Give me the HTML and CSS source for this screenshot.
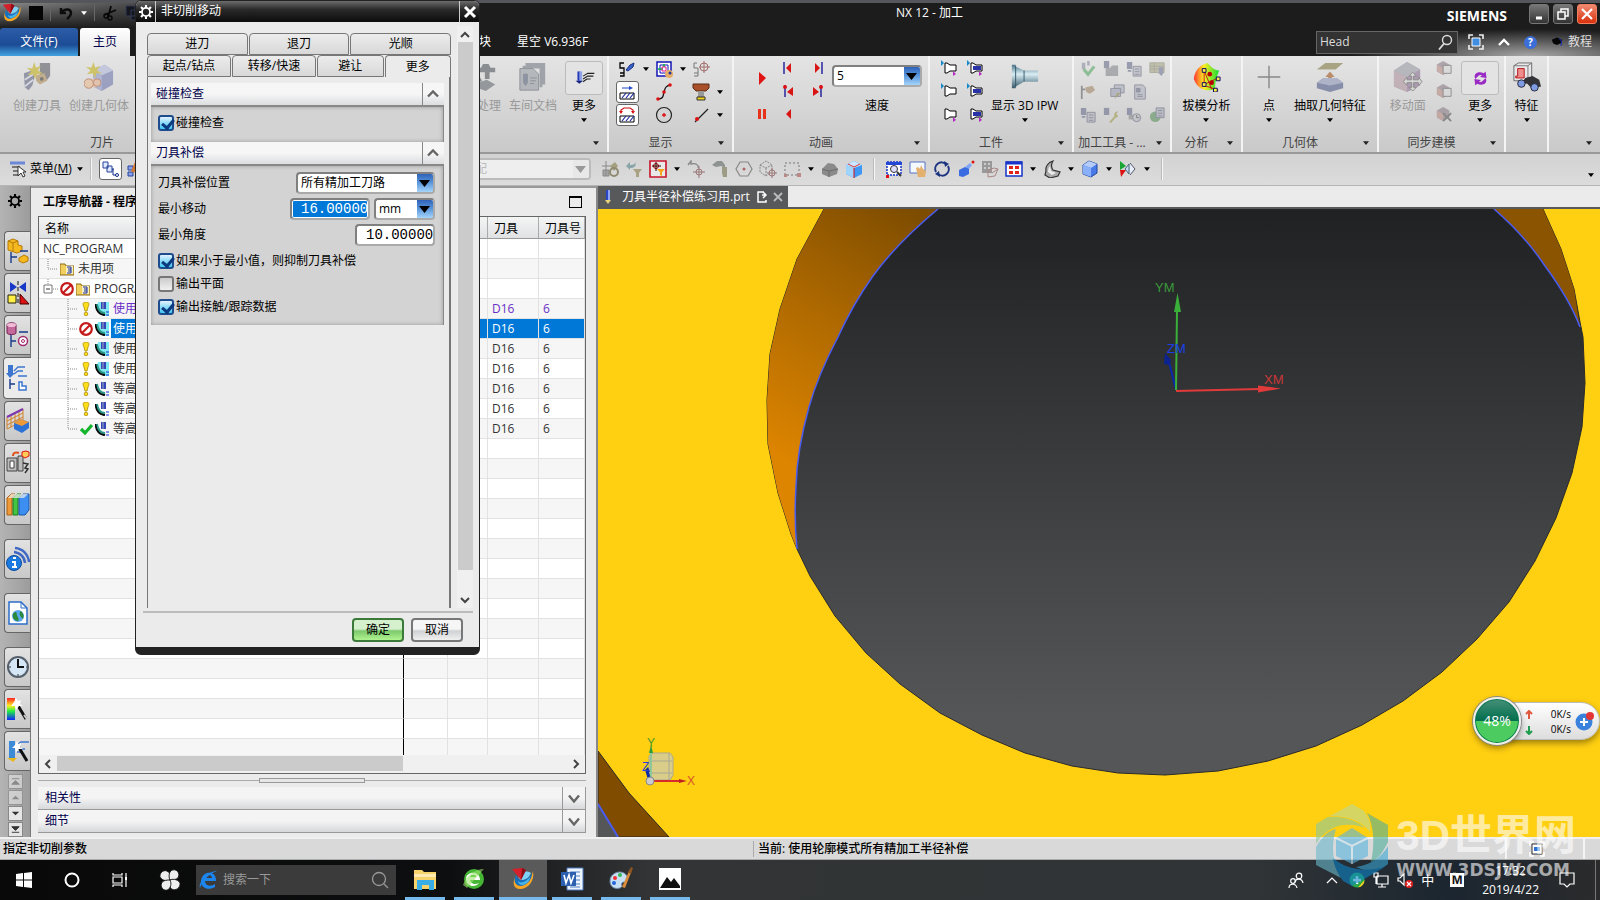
FILE: index.html
```html
<!DOCTYPE html>
<html lang="zh-CN">
<head>
    <meta charset="UTF-8">
    <meta name="viewport" content="width=device-width, initial-scale=1.0">
    <title>NX 12 - 加工</title>
    <link rel="stylesheet" href="styles.css">
</head>
<body>
    <!-- Icon sprite -->
    <svg class="sprite" aria-hidden="true">
        <defs>
            <linearGradient id="g-steel" x1="0" y1="0" x2="0" y2="1"><stop offset="0" stop-color="#4b7688"/><stop offset=".4" stop-color="#d9edf4"/><stop offset="1" stop-color="#35596a"/></linearGradient>
            <linearGradient id="g-rain" x1="0" y1="0" x2="1" y2="0"><stop offset="0" stop-color="#f33"/><stop offset=".4" stop-color="#fe2"/><stop offset="1" stop-color="#1d3"/></linearGradient>
            <linearGradient id="g-rainv" x1="0" y1="0" x2="0" y2="1"><stop offset="0" stop-color="#f22"/><stop offset=".35" stop-color="#fe2"/><stop offset=".6" stop-color="#2e4"/><stop offset="1" stop-color="#12f"/></linearGradient>
        </defs>
        <symbol id="down" viewBox="0 0 8 5"><path d="M0 0h8L4 5z" fill="currentColor"/></symbol>
        <symbol id="gear" viewBox="0 0 16 16"><circle cx="8" cy="8" r="4.6" fill="none" stroke="currentColor" stroke-width="2"/><path d="M8 0v3M8 13v3M0 8h3M13 8h3M2.3 2.3l2.2 2.2M11.5 11.5l2.2 2.2M2.3 13.7l2.2-2.2M11.5 4.5l2.2-2.2" stroke="currentColor" stroke-width="2.4"/></symbol>
        <symbol id="nx" viewBox="0 0 24 24"><path d="M5 9c-4 6-3 13 4 13 8 0 15-8 13-18-1 6-6 11-11 12-4 0-6-3-6-7z" fill="#f6a623"/><path d="M5 8c-3 5-1 11 5 11 6-1 11-6 11-13-2 4-6 7-10 7-3 0-5-2-6-5z" fill="#1670c0"/><path d="M7 8c0-3 9-5 13-2-2 5-6 7-9 7-2 0-4-2-4-5z" fill="#7fd0f5"/><path d="M7 14c3 3 8 1 12-4 0 4-4 8-8 8-2 0-4-2-4-4z" fill="#49b5e8"/><path d="M1 2l10-1 4 2-5 10z" fill="#d3202b"/><path d="M11 1l4 2-5 10z" fill="#8c0f18"/></symbol>
        <symbol id="undo" viewBox="0 0 16 16"><path d="M3 3v5h5M4 7c3-4 9-3 9 1 0 3-2 4-4 6" fill="none" stroke="#0c0c0c" stroke-width="2.500"/></symbol>
        <symbol id="cut" viewBox="0 0 16 16"><path d="M2 10l12-5M6 13l3-12" stroke="#080808" stroke-width="1.800"/><circle cx="4" cy="11" r="2" fill="none" stroke="#080808" stroke-width="1.500"/><circle cx="8" cy="13" r="2" fill="none" stroke="#080808" stroke-width="1.500"/></symbol>
        <symbol id="copy" viewBox="0 0 16 16"><path d="M1 1h9v10H1zM6 5h9v10H6z" fill="#15161d" stroke="#333a55"/></symbol>
        <symbol id="search" viewBox="0 0 16 16"><circle cx="10" cy="6" r="4.5" fill="none" stroke="currentColor" stroke-width="1.4"/><path d="M7 9.500l-5 6" stroke="currentColor" stroke-width="1.800"/></symbol>
        <symbol id="full" viewBox="0 0 16 16"><path d="M1 5V1h4M11 1h4v4M15 11v4h-4M5 15H1v-4" fill="none" stroke="#eee" stroke-width="1.6"/><path d="M4 4h8v8H4z" fill="#3f8ce0" stroke="#fff"/></symbol>
        <symbol id="up" viewBox="0 0 12 8"><path d="M1 7l5-5 5 5" fill="none" stroke="currentColor" stroke-width="2.400"/></symbol>
        <symbol id="hat" viewBox="0 0 16 16"><path d="M1 5l7-3 7 3-1 4-6 3-5-2z" fill="#050505"/><path d="M11 4c3 1 4 5 2 9" fill="none" stroke="#1b2ea8" stroke-width="1.500"/></symbol>

        <!-- ribbon, large -->
        <symbol id="mktool" viewBox="0 0 32 32"><path d="M19 1h11v14l-4 5-7-2z" fill="#6f7078"/><path d="M15 14l9-2 3 8-8 4-4-4z" fill="#b69a6c"/><path d="M2 12l9-3 3 5-3 11-4 5-4-3z" fill="#74788e"/><path d="M3 19l9-6M3 26l9-7" stroke="#d3d6e3" stroke-width="2"/><path d="M13 0l2 6 5-2-3 5 5 3-6 1-2 5-2-5-6 1 4-4-5-4 6 1z" fill="#c6b738"/><circle cx="21" cy="18" r="2" fill="#555"/></symbol>
        <symbol id="mkgeo" viewBox="0 0 32 32"><path d="M10 9l12-6 9 6v15l-12 7-9-5z" fill="#8188b5"/><path d="M10 9l9 5v17l-9-5z" fill="#9ca3cb"/><path d="M10 9l12-6 9 6-12 5z" fill="#b9bedb"/><path d="M5 18h8v9H5z" fill="#e4b89a"/><circle cx="5" cy="23" r="5" fill="#e8c19d" stroke="#b06a4c"/><circle cx="14" cy="22" r="4" fill="#e4b89a" stroke="#b06a4c"/><path d="M10 0l2 6 5-2-3 5 5 3-6 0-1 5-3-5-6 1 4-4-5-4 6 1z" fill="#c6b738"/></symbol>
        <symbol id="post" viewBox="0 0 32 32"><path d="M2 12h10v3l3 5-5 3-6-2zM10 6h4l2-4h6l2 4h5v5h-6v7h-5v-7h-8z" fill="#666b70"/><path d="M8 23l12-4 9 5-10 7-11-4z" fill="#777b80"/></symbol>
        <symbol id="docs" viewBox="0 0 32 32"><path d="M8 1h21v23h-3V4H8zM5 4h21v23h-3V7H5z" fill="#858b93"/><path d="M2 7h14l6 6v17H2z" fill="#a3a8af" stroke="#6c727a"/><path d="M6 13h4v9l-2 3-2-3zM13 17h7M13 20h6M13 23h4" fill="#6b7790" stroke="#6c727a"/></symbol>
        <symbol id="mill" viewBox="0 0 32 32"><path d="M9 9h3v10H9z" fill="#2438b8"/><path d="M11 9h3v10h-3z" fill="#8fa3e6"/><path d="M7 19h8l-4 3z" fill="#16227c"/><path d="M15 14l5-3h7M15 17l5-3h6M15 20l4-3h4" fill="none" stroke="#222" stroke-width="1.200"/></symbol>
        <symbol id="ipw" viewBox="0 0 32 32"><path d="M2 3h4v2l9 4h15v12H15l-9 5v2H2z" fill="url(#g-steel)"/><path d="M6 4v23M15 9v12" stroke="#35596a"/></symbol>
        <symbol id="draft" viewBox="0 0 32 32"><path d="M3 18C4 9 9 3 18 1c3 4 7 8 12 8-3 8-5 15-4 20-8 3-19 1-23-11z" fill="url(#g-rain)"/><path d="M14 9l8 20M14 24l15-7M14 9v16l15 5" stroke="#c51313" fill="none"/><path d="M12 7h4v4h-4zM12 22h4v4h-4zM27 16h4v4h-4zM24 28h4v4h-4z" fill="#fe4" stroke="#006"/><circle cx="20" cy="13" r="2.500" fill="#b00"/><circle cx="22" cy="22" r="2.500" fill="#b00"/></symbol>
        <symbol id="point" viewBox="0 0 32 32"><path d="M16 4v24M4 16h24" stroke="#888" stroke-width="1.500"/></symbol>
        <symbol id="extract" viewBox="0 0 32 32"><path d="M2 8l9-7h19l-8 7z" fill="#a8a483"/><path d="M16 10l5 6h-3v6h-4v-6h-3z" fill="#b98d6c"/><path d="M2 22l7-5h14l7 5v6l-14 4-14-4z" fill="#878eaa"/><path d="M2 22l7-5h14l7 5-14 3z" fill="#aeb3c8"/></symbol>
        <symbol id="cubemove" viewBox="0 0 32 32"><path d="M1 9l14-9 14 8v17l-14 7L1 26z" fill="#98809f"/><path d="M1 9l14 7v16L1 26z" fill="#b7a0a8"/><path d="M1 9l14-9 14 8-14 8z" fill="#a5a5af"/><path d="M21 11l4 4h-3v4h5v-3l4 5-4 4v-3h-5v5h3l-4 4-4-4h3v-5h-5v3l-4-4 4-5v3h5v-4h-3z" fill="#d4d4d4" stroke="#666"/></symbol>
        <symbol id="sync" viewBox="0 0 32 32"><path d="M11 17c-3-6 4-9 9-6l2-2 1 7-7-1 2-2c-3-1-4 1-7 4zM22 16c3 6-4 9-9 6l-2 2-1-7 7 1-2 2c3 1 4-1 7-4z" fill="#9a2bc4"/></symbol>
        <symbol id="feature" viewBox="0 0 32 32"><path d="M2 4l5-3h14v15l-4 4H2z" fill="#e8e8ea" stroke="#666"/><path d="M17 4l4-3M2 4h15v16" stroke="#777" fill="none"/><path d="M6 7h7v10H4v-2h2z" fill="#ef8c8c" stroke="#b41414"/><path d="M14 17l8-2 7 4 2 7-10 2-5-5-6 1z" fill="#343438"/><circle cx="10" cy="23" r="4" fill="#7f9be2" stroke="#223"/><circle cx="24" cy="27" r="4" fill="#7f9be2" stroke="#223"/></symbol>

        <!-- ribbon, small -->
        <symbol id="s5pen" viewBox="0 0 18 18"><path d="M6 3H2v5h4v5H2M2 16h4v-3" fill="none" stroke="#000" stroke-width="1.300"/><path d="M8 10l4-5 4-2-1 4-5 4z" fill="#3b62cf" stroke="#18307c"/></symbol>
        <symbol id="rings" viewBox="0 0 18 18"><path d="M2 2h14v14H2z" fill="#fff" stroke="#1414b8" stroke-width="1.500"/><path d="M5 5h8v8H5z" fill="none" stroke="#1414b8"/><path d="M3 9h5M9 4v3" stroke="#00bb36" stroke-width="1.500"/><path d="M7 7h4v4H7z" fill="none" stroke="#e2138d"/><circle cx="14" cy="14" r="4" fill="#e5ad66"/><circle cx="15" cy="13" r="1.500" fill="#23a"/></symbol>
        <symbol id="s5aim" viewBox="0 0 18 18"><path d="M5 3H2v5h4v5H2M2 16h4v-3" fill="none" stroke="#777"/><circle cx="12" cy="7" r="4" fill="none" stroke="#a06c6c"/><path d="M12 1v12M7 7h11" stroke="#a06c6c"/></symbol>
        <symbol id="hatch" viewBox="0 0 18 18"><path d="M2 10h14v6H2z" fill="#fff" stroke="#000"/><path d="M4 15l4-5M8 15l4-5M12 15l4-5" stroke="#1d2a9d" stroke-width="1.200"/><path d="M4 5h9" stroke="#1e49c9"/><path d="M11 3l4 2-4 2z" fill="#1e49c9"/></symbol>
        <symbol id="hatchr" viewBox="0 0 18 18"><path d="M2 10h14v6H2z" fill="#fff" stroke="#000"/><path d="M4 15l4-5M8 15l4-5M12 15l4-5" stroke="#1d2a9d" stroke-width="1.200"/><path d="M3 6V4l3-2h6l3 2v2" stroke="#c11" fill="none" stroke-width="1.200"/><path d="M1 5h4l-2 3zM13 5h4l-2 3z" fill="#d11"/></symbol>
        <symbol id="curve" viewBox="0 0 18 18"><path d="M3 16c6 0 5-4 6-7s1-6 6-7" fill="none" stroke="#111" stroke-width="1.300"/><circle cx="3" cy="16" r="1.800" fill="#d11"/><circle cx="9" cy="9" r="1.800" fill="#d11"/><circle cx="15" cy="2" r="1.800" fill="#d11"/></symbol>
        <symbol id="holder" viewBox="0 0 18 18"><path d="M1 1h16v4l-3 3H4L1 5z" fill="#a9502a" stroke="#5c2a12"/><path d="M6 8h6v6H6z" fill="#999"/><path d="M5 14h8v3H5z" fill="#f2d21b" stroke="#333"/></symbol>
        <symbol id="circ" viewBox="0 0 18 18"><circle cx="9" cy="9" r="7.500" fill="none" stroke="#222" stroke-width="1.200"/><path d="M9 7v4M7 9h4" stroke="#d11" stroke-width="1.400"/></symbol>
        <symbol id="slash" viewBox="0 0 18 18"><path d="M3 16L16 3" stroke="#222" stroke-width="1.300"/><circle cx="5" cy="13" r="2" fill="#d11"/></symbol>
        <symbol id="play" viewBox="0 0 18 18"><path d="M6 3l7 6-7 7z" fill="#e01414"/></symbol>
        <symbol id="pause" viewBox="0 0 18 18"><path d="M5 4h3v10H5zM10 4h3v10h-3z" fill="#e8321c"/></symbol>
        <symbol id="first" viewBox="0 0 18 18"><path d="M5 3v12" stroke="#1b1b9a" stroke-width="1.400"/><path d="M12 4v10L7 9z" fill="#d91414"/></symbol>
        <symbol id="last" viewBox="0 0 18 18"><path d="M13 3v12" stroke="#1b1b9a" stroke-width="1.400"/><path d="M6 4v10l5-5z" fill="#d91414"/></symbol>
        <symbol id="firstd" viewBox="0 0 18 18"><path d="M6 3v12" stroke="#1b1b9a" stroke-width="1.400"/><circle cx="6" cy="5" r="2" fill="#d11"/><path d="M14 5v9L8 10z" fill="#d91414"/></symbol>
        <symbol id="lastd" viewBox="0 0 18 18"><path d="M12 3v12" stroke="#1b1b9a" stroke-width="1.400"/><circle cx="12" cy="5" r="2" fill="#d11"/><path d="M4 5v9l6-4z" fill="#d91414"/></symbol>
        <symbol id="back" viewBox="0 0 18 18"><path d="M12 4v10L7 9z" fill="#d91414"/></symbol>
        <symbol id="wp1" viewBox="0 0 18 18"><path d="M5 4h2l3 2h6v6h-6l-3 2H5z" fill="#fff" stroke="#000"/><path d="M1 1v6l3-3z" fill="#1589c9"/><path d="M13 12v5l3-2z" fill="#b52bc4"/></symbol>
        <symbol id="wp2" viewBox="0 0 18 18"><path d="M5 4h2l3 2h6v6h-6l-3 2H5z" fill="#fff" stroke="#000"/><path d="M7 7h8v4H7z" fill="#2a32a8"/><path d="M1 1v6l3-3z" fill="#1589c9"/><path d="M13 12v5l3-2z" fill="#b52bc4"/></symbol>
        <symbol id="wp3" viewBox="0 0 18 18"><path d="M5 4h2l3 2h6v6h-6l-3 2H5z" fill="#fff" stroke="#000"/><path d="M1 1v6l3-3z" fill="#1589c9"/></symbol>
        <symbol id="wp4" viewBox="0 0 18 18"><path d="M5 4h2l3 2h6v6h-6l-3 2H5z" fill="#fff" stroke="#000"/><path d="M13 12v5l3-2z" fill="#b52bc4"/></symbol>
        <symbol id="wp5" viewBox="0 0 18 18"><path d="M5 4h2l3 2h6v6h-6l-3 2H5z" fill="#fff" stroke="#000"/><path d="M7 7h8v4H7z" fill="#2a32a8"/><path d="M1 1v6l3-3z" fill="#1589c9"/></symbol>
        <symbol id="wp6" viewBox="0 0 18 18"><path d="M5 4h2l3 2h6v6h-6l-3 2H5z" fill="#fff" stroke="#000"/><path d="M7 7h8v4H7z" fill="#2a32a8"/><path d="M13 12v5l3-2z" fill="#b52bc4"/></symbol>
        <symbol id="t-check" viewBox="0 0 18 18"><path d="M2 2h4v7H2zM8 0h3v5H8z" fill="#8c90a3"/><path d="M4 9l5 6 7-9" fill="none" stroke="#58a868" stroke-width="3.500"/></symbol>
        <symbol id="t-part" viewBox="0 0 18 18"><path d="M1 0h6v8H1z" fill="#6a6f8c"/><path d="M3 8h5l2-3h7v12H3z" fill="#85888f"/></symbol>
        <symbol id="t-list" viewBox="0 0 18 18"><path d="M1 1h6v8H1zM2 10h4v2H2z" fill="#6a6f8c"/><path d="M8 6h9v11H8z" fill="#b2b4c0" stroke="#5f6278"/><path d="M10 9h5M10 12h5M10 15h5" stroke="#5f6278"/></symbol>
        <symbol id="t-doc" viewBox="0 0 18 18"><path d="M3 1h9l3 3v13H3z" fill="#b2b4c0" stroke="#5f6278"/><path d="M5 5h4v4H5zM6 12h6M6 14h6" fill="#6a6f8c" stroke="#5f6278"/></symbol>
        <symbol id="t-flag" viewBox="0 0 18 18"><path d="M2 2v15M2 6h4" stroke="#666" stroke-width="2"/><path d="M6 4l8-2 3 5-6 4-4-2z" fill="#a08868"/></symbol>
        <symbol id="t-copy" viewBox="0 0 18 18"><path d="M6 1h11v9H6z" fill="#aaaebb" stroke="#5f6278"/><path d="M2 5h11v9H2z" fill="#9da0b3" stroke="#5f6278"/><path d="M6 17l3-7h4z" fill="#8b8246"/></symbol>
        <symbol id="t-clock" viewBox="0 0 18 18"><path d="M1 1h6v8H1z" fill="#6a6f8c"/><path d="M3 9h5v5H3z" fill="#8a8a8a"/><circle cx="12" cy="12" r="4.500" fill="#b9bcc4" stroke="#5f6278"/><path d="M12 9v3h3" fill="none" stroke="#444"/></symbol>
        <symbol id="t-wrench" viewBox="0 0 18 18"><path d="M1 1h6v8H1z" fill="#6a6f8c"/><path d="M7 17l6-7c-1-3 1-5 4-5l-2 3 2 2c-1 2-2 2-3 2l-5 6z" fill="#a19a4e"/></symbol>
        <symbol id="t-globe" viewBox="0 0 18 18"><circle cx="7" cy="11" r="6" fill="#5c9260"/><path d="M8 1h9v11H8z" fill="#a9adbc" stroke="#5f6278"/><path d="M10 4h5M10 7h5M10 10h5" stroke="#5f6278"/></symbol>
        <symbol id="t-grid" viewBox="0 0 18 18"><path d="M1 2h16v11H1z" fill="#aaa98b" stroke="#88886f"/><path d="M1 6h16M1 9h16M6 2v11" stroke="#88886f"/><path d="M11 7h5v7l-2 3-3-3z" fill="#737896"/></symbol>
        <symbol id="cubes" viewBox="0 0 18 18"><path d="M1 5l7-4 7 4v8l-7 4-7-4z" fill="#8d7d88"/><path d="M1 5l7 4v8l-7-4z" fill="#b68c84"/><path d="M8 6h9v9H8z" fill="#d6d6d6" stroke="#555"/></symbol>
        <symbol id="cubex" viewBox="0 0 18 18"><path d="M1 5l7-4 7 4v8l-7 4-7-4z" fill="#8d7d88"/><path d="M1 5l7 4v8l-7-4z" fill="#b68c84"/><path d="M8 8l9 9M17 8l-9 9" stroke="#555" stroke-width="2"/></symbol>

        <!-- selection bar -->
        <symbol id="menu" viewBox="0 0 18 18"><path d="M1 3h15" stroke="#6b87d8" stroke-width="3"/><path d="M3 7h8M4 11h6M4 15h6" stroke="#777" stroke-width="2"/><path d="M9 6v10l3-3 2 4 2-1-2-4h3z" fill="#fff" stroke="#333"/></symbol>
        <symbol id="tree" viewBox="0 0 18 18"><path d="M2 2h5v6H2zM6 6h5v6H6z" fill="#dfe8ff" stroke="#27429c"/><path d="M12 9v6h3M11 9h2" stroke="#112a8a" fill="none"/><circle cx="16" cy="15" r="1.500" fill="none" stroke="#112a8a"/></symbol>
        <symbol id="tree2" viewBox="0 0 18 18"><path d="M2 6h5v4H2zM2 12h5v4H2z" fill="#8aa2ea" stroke="#27429c"/><path d="M5 11l4-9 4 2-5 9z" fill="#cf7a38"/></symbol>
        <symbol id="m1" viewBox="0 0 18 18"><path d="M5 1v15M1 6h9M2 10h6v6H2z" stroke="#888" fill="#a4a4a4"/><path d="M9 6l5-4 3 4-4 5z" fill="#a4a07f"/><circle cx="13" cy="12" r="4" fill="none" stroke="#8e8b70" stroke-width="2"/></symbol>
        <symbol id="m2" viewBox="0 0 18 18"><path d="M1 6l4-4v3c4 0 5-1 5-3 2 4-1 6-5 6v2z" fill="#8aa5aa"/><path d="M8 9h9l-3 4v4h-3v-4z" fill="#aaa383"/></symbol>
        <symbol id="m3" viewBox="0 0 18 18"><path d="M1 1h16v16H1z" fill="#e9e9e9" stroke="#c8132a" stroke-width="1.600"/><circle cx="7" cy="6" r="2.500" fill="none" stroke="#a00"/><path d="M7 2v9M3 6h9" stroke="#300"/><path d="M8 9h8l-3 3v4l-2-1v-3z" fill="#f5a516"/></symbol>
        <symbol id="m4" viewBox="0 0 18 18"><path d="M1 5l3-4v3c5-1 8 1 7 4" fill="none" stroke="#888" stroke-width="1.300"/><circle cx="12" cy="12" r="3" fill="none" stroke="#977"/><path d="M12 6v12M6 12h12" stroke="#977"/></symbol>
        <symbol id="m5" viewBox="0 0 18 18"><path d="M1 5l5-4h5l3 4v3l-4-2-5 1z" fill="#8f9392"/><path d="M11 7h5v10h-4l-1-4z" fill="#9c9c86"/></symbol>
        <symbol id="m6" viewBox="0 0 18 18"><path d="M5 2h8l4 7-4 7H5L1 9z" fill="none" stroke="#888" stroke-width="1.200"/><circle cx="9" cy="9" r="1.500" fill="#a66"/></symbol>
        <symbol id="m7" viewBox="0 0 18 18"><path d="M1 5l6-4 6 4v7l-6 4-6-4zM1 5l6 3 6-3M7 8v8" fill="none" stroke="#888" stroke-dasharray="2 1"/><circle cx="13" cy="13" r="3" fill="#ddd" stroke="#977"/><path d="M13 8v10M8 13h10" stroke="#977"/></symbol>
        <symbol id="m8" viewBox="0 0 18 18"><path d="M2 3h14v12H2z" fill="none" stroke="#777" stroke-dasharray="2 2"/><path d="M14 13h4v4h-4zM1 14h3v3H1z" fill="#b88"/></symbol>
        <symbol id="m9" viewBox="0 0 18 18"><path d="M1 9l6-6 6 1 4 5-1 5-8 3-7-3z" fill="#8a8a8a"/><path d="M1 9l7 2 9-2M8 11v6" stroke="#6b6b6b" fill="none"/></symbol>
        <symbol id="m10" viewBox="0 0 18 18"><path d="M1 5l8-4 8 4v9l-8 4-8-4z" fill="#3e97f0"/><path d="M1 5l8 3v10l-8-4z" fill="#9fd4ff"/><path d="M1 5l8-4 8 4-8 3z" fill="#c9e7ff"/><path d="M9 8v10" stroke="#d11"/><path d="M3 4l6 3 6-3" stroke="#d33" fill="none"/></symbol>
        <symbol id="m11" viewBox="0 0 18 18"><path d="M2 2h14v13H2z" fill="#fff" stroke="#1733c8" stroke-width="1.500" stroke-dasharray="2 1"/><path d="M1 2h16v3H1z" fill="#2447d8"/><circle cx="9" cy="9" r="3.500" fill="#ddf" stroke="#333"/><path d="M12 12l4 4" stroke="#333" stroke-width="2"/><path d="M1 15h3v3H1z" fill="#d11"/></symbol>
        <symbol id="m12" viewBox="0 0 18 18"><path d="M1 2h15v11H1z" fill="#f4f8ff" stroke="#5673c4"/><path d="M7 8l2-1 2 2 1-4 2 4 3 2-1 6H9z" fill="#e3b16d"/></symbol>
        <symbol id="m13" viewBox="0 0 18 18"><path d="M3 12A6.500 6.500 0 0 1 13 4M15 6A6.500 6.500 0 0 1 5 14" fill="none" stroke="#1d3480" stroke-width="2"/><path d="M11 1l5 3-4 3zM7 17l-5-3 4-3z" fill="#1d3480"/></symbol>
        <symbol id="m14" viewBox="0 0 18 18"><path d="M2 10l6-3 4 1v6l-6 3-4-1z" fill="#3a6be0"/><path d="M8 7l5-4 2 2-3 4z" fill="#7fa6f5"/><circle cx="16" cy="2" r="1.500" fill="#d11"/></symbol>
        <symbol id="m15" viewBox="0 0 18 18"><path d="M1 1h10v12H1z" fill="#999"/><path d="M3 4h2M7 4h2M3 8h2M7 8h2" stroke="#ccc" stroke-width="2"/><path d="M7 10l6-2 4 1-3 7-7 1zM7 10l4 3 6-4" fill="none" stroke="#a88"/></symbol>
        <symbol id="m16" viewBox="0 0 18 18"><path d="M1 2h16v14H1z" fill="#fff" stroke="#1733c8" stroke-width="1.500"/><path d="M1 3h16" stroke="#1733c8" stroke-width="3"/><path d="M4 6h4v3H4zM10 6h4v3h-4zM4 11h4v3H4zM10 11h4v3h-4z" fill="#e2231a"/></symbol>
        <symbol id="m17" viewBox="0 0 18 18"><path d="M3 11C2 6 6 2 10 1c-2 3-2 6 0 9l7 2-2 4-8 2-5-3z" fill="#aaa" stroke="#333" stroke-width="1.200"/><path d="M5 12c0-3 1-5 2-6l1 5 5 2-4 2z" fill="#eee"/></symbol>
        <symbol id="m18" viewBox="0 0 18 18"><path d="M2 5l6-4 8 3v9l-6 4-8-3z" fill="#4a7ae8" stroke="#20449c"/><path d="M2 5l6-4 8 3-6 4z" fill="#b5ccfa"/><path d="M2 5l8 3v9l-8-3z" fill="#8bb0fa"/></symbol>
        <symbol id="m19" viewBox="0 0 18 18"><path d="M1 1l6 5-6 4z" fill="#19a535"/><path d="M1 10l6 0-5 7z" fill="#d11"/><path d="M6 9l4-5v10z" fill="#c6d8f6" stroke="#467"/><path d="M11 3l5 6-5 6" fill="#e6eefc" stroke="#556"/></symbol>

        <!-- resource bar -->
        <symbol id="r1" viewBox="0 0 24 26"><path d="M2 3l5-2 5 2v4l4 1v5l-5 2-9-3z" fill="#f5b81f" stroke="#b57b08"/><path d="M2 3l5 2 5-2M7 5v8" stroke="#b57b08" fill="none"/><path d="M5 14v11M5 19h6M14 13h8" stroke="#173a8a" stroke-width="1.400"/><path d="M13 20l5-3 4 2v4l-5 2-4-2z" fill="#f5b81f" stroke="#b57b08"/></symbol>
        <symbol id="r2" viewBox="0 0 24 26"><path d="M4 2v10l7-5zM20 2v10l-7-5z" fill="#1838c8"/><path d="M12 1v24" stroke="#111" stroke-dasharray="4 2"/><path d="M2 15h8v8H2z" fill="#fe4" stroke="#221"/><path d="M14 14v10h9z" fill="#d11" stroke="#400"/></symbol>
        <symbol id="r3" viewBox="0 0 24 26"><path d="M1 3c0-3 9-3 9 0v8c0 2-9 2-9 0z" fill="#c26a9c" stroke="#701c4c"/><ellipse cx="5.500" cy="3" rx="4.500" ry="2" fill="#f0bcd8"/><path d="M5 13v12M5 19h5M13 10h9" stroke="#173a8a" stroke-width="1.400"/><circle cx="17" cy="19" r="4.500" fill="#fff" stroke="#a02c70" stroke-width="1.500"/><circle cx="17" cy="19" r="1.500" fill="none" stroke="#a02c70"/></symbol>
        <symbol id="r4" viewBox="0 0 24 26"><path d="M3 0h5v8H3z" fill="#3c76cf"/><path d="M1 8h9l-5 5z" fill="#3c76cf"/><path d="M9 6l4-4h7M9 9l4-3h5M13 11h9" stroke="#3c76cf" stroke-width="1.300" fill="none"/><path d="M5 14v10M5 19h5" stroke="#173a8a" stroke-width="1.400"/><path d="M14 17h3v4h4v4h-7z" fill="#fff" stroke="#3c76cf" stroke-width="1.500"/></symbol>
        <symbol id="r5" viewBox="0 0 24 26"><path d="M1 9L17 1v12L1 21zM1 13l16-8M1 17l16-8M5 7v12M9 5v12M13 3v12" stroke="#d2822a" fill="none"/><path d="M1 9L17 1" stroke="#7a35b0" stroke-width="2"/><path d="M8 15l6-4 9 3v6l-7 5-8-4z" fill="#2c71d6"/><path d="M8 15l6-4 9 3-7 4z" fill="#ef9a3a"/></symbol>
        <symbol id="r6" viewBox="0 0 24 26"><path d="M1 8h10v13H1zM12 6h5v15h-5z" fill="#bbb" stroke="#444"/><path d="M4 11h4v7H4z" fill="#fff" stroke="#444"/><path d="M7 6c0-4 4-4 6-3" stroke="#e2501b" stroke-width="2" fill="none"/><path d="M16 2l4-1 3 1v4l-4 2-3-2z" fill="#fc5" stroke="#d11"/><path d="M17 13l5 1-3 4 3 1-3 4" fill="none" stroke="#333" stroke-width="1.500"/></symbol>
        <symbol id="r7" viewBox="0 0 24 26"><path d="M1 6l4-4h4L6 6v17H1z" fill="#ef9a3a" stroke="#a85f10"/><path d="M7 6l4-4h4l-3 4v17H7z" fill="#43c443" stroke="#1b7a1b"/><path d="M13 6l4-4h6v16l-4 5h-6z" fill="#3c8ff0" stroke="#1a52a8"/><path d="M5 2h17l-4 4H2z" fill="#eee" opacity=".7"/></symbol>
        <symbol id="r8" viewBox="0 0 24 26"><path d="M8 6a12 12 0 0 1 11 11M9 2a15 15 0 0 1 14 14" fill="none" stroke="#3d68c4" stroke-width="2.500"/><circle cx="8" cy="17" r="7.500" fill="#1b7ae0" stroke="#0c4aa0"/><path d="M7 12h3M6 16h3v5M6 21h5" stroke="#fff" stroke-width="2" fill="none"/></symbol>
        <symbol id="r9" viewBox="0 0 24 26"><path d="M3 2h12l6 6v16H3z" fill="#fff" stroke="#2c6cc8" stroke-width="1.500"/><path d="M15 2v6h6" fill="none" stroke="#2c6cc8"/><circle cx="12" cy="16" r="6" fill="#5aa7ef"/><path d="M7 14c3-4 4-1 4 1s3 3 1 6c-4 0-6-4-5-7zM14 11c4 2 4 5 3 8-3-2-4-5-3-8z" fill="#2b8a3a"/></symbol>
        <symbol id="r10" viewBox="0 0 24 26"><circle cx="12" cy="13" r="10" fill="#d5e6f7" stroke="#555f6c" stroke-width="2"/><path d="M12 5v8h6" fill="none" stroke="#111" stroke-width="2"/><path d="M12 20v2M3 13h2M20 13h1" stroke="#333"/></symbol>
        <symbol id="r11" viewBox="0 0 24 26"><path d="M1 2h8v22H1z" fill="url(#g-rainv)"/><path d="M11 8l9 15" stroke="#111" stroke-width="3"/><path d="M10 2l2 3 3-1-1 4 3 2-4 0-3 4-1-4-4 0 3-4z" fill="#fff"/><path d="M18 19l3 4" stroke="#ccc" stroke-width="2"/></symbol>
        <symbol id="r12" viewBox="0 0 24 26"><path d="M3 3h6v17H3z" fill="#3c8bd6"/><path d="M1 20h10l-4 4z" fill="#e8b823"/><path d="M11 7l4-3h8M11 11h8M11 14h6" stroke="#3c76cf" stroke-width="1.500" fill="none"/><path d="M12 8l9 15" stroke="#111" stroke-width="3"/><path d="M11 3l1 3 3-1-1 4 3 2-4 0-3 3-1-4-3 0 3-3z" fill="#fff"/></symbol>

        <!-- operation tree -->
        <symbol id="folder" viewBox="0 0 14 14"><path d="M0 2h5l1 2h8v9H0z" fill="#f0cf5e" stroke="#8b6b14"/><path d="M6 4h7v8H6z" fill="#f8efc0"/><path d="M7 5h4v2H8M8 9h3V7M7 11h4V9" stroke="#1a2fa8" fill="none"/></symbol>
        <symbol id="noentry" viewBox="0 0 14 14"><circle cx="7" cy="7" r="5.800" fill="#fff" stroke="#c51a1a" stroke-width="2.200"/><path d="M3 11l8-8" stroke="#c51a1a" stroke-width="2.200"/></symbol>
        <symbol id="warn" viewBox="0 0 14 14"><path d="M7 0c4 0 3 3 2 5L8 9H6L5 5C4 3 3 0 7 0z" fill="#ffdf1c" stroke="#a98900" stroke-width=".8"/><circle cx="7" cy="12" r="1.800" fill="#ffdf1c" stroke="#a98900" stroke-width=".8"/></symbol>
        <symbol id="ok" viewBox="0 0 14 14"><path d="M2 7l4 4 7-8" fill="none" stroke="#13b52c" stroke-width="3.200"/></symbol>
        <symbol id="op" viewBox="0 0 14 14"><path d="M1 2c0 7 3 10 9 11" fill="none" stroke="#0a0a0a" stroke-width="2.500"/><path d="M2 2c1 6 4 9 8 9" fill="none" stroke="#2a9a8a" stroke-width="1.800"/><path d="M6 0h5v7H6z" fill="#3646b8"/><path d="M8 0v7" stroke="#9ab"/><path d="M11 10h3M11 13h3" stroke="#1633d8"/></symbol>
        <symbol id="opc" viewBox="0 0 14 14"><path d="M3 0h11v14H9L3 8z" fill="#7fe9f2"/><path d="M1 2c0 7 3 10 9 11" fill="none" stroke="#0a0a0a" stroke-width="2.500"/><path d="M2 2c1 6 4 9 8 9" fill="none" stroke="#2a9a8a" stroke-width="1.800"/><path d="M6 0h5v7H6z" fill="#3646b8"/><path d="M8 0v7" stroke="#9ab"/><path d="M11 10h3M11 13h3" stroke="#1633d8"/></symbol>
        <symbol id="b1" viewBox="0 0 20 20"><path d="M10 0v10h11" fill="none" stroke="#888" stroke-dasharray="1 1"/></symbol>
        <symbol id="b2" viewBox="0 0 20 20"><path d="M10 0v6M15 10h5" fill="none" stroke="#888" stroke-dasharray="1 1"/><path d="M6 6h8v8H6z" fill="#fff" stroke="#777"/><path d="M8 10h4" stroke="#333"/></symbol>
        <symbol id="b3" viewBox="0 0 20 20"><path d="M11 0v20M11 10h9" fill="none" stroke="#888" stroke-dasharray="1 1"/></symbol>
        <symbol id="b4" viewBox="0 0 20 20"><path d="M11 0v10h9" fill="none" stroke="#888" stroke-dasharray="1 1"/></symbol>

        <!-- taskbar -->
        <symbol id="win" viewBox="0 0 16 16"><path d="M0 2l7-1v6.500H0zM8 1l8-1v7.500H8zM0 8.500h7V15l-7-1zM8 8.500h8V16l-8-1z" fill="#fff"/></symbol>
        <symbol id="cort" viewBox="0 0 16 16"><circle cx="8" cy="8" r="6.500" fill="none" stroke="#fff" stroke-width="2"/></symbol>
        <symbol id="tview" viewBox="0 0 16 16"><path d="M1 1v2h9V1M1 5h9v6H1zM1 15v-2h9v2M14 1v14" fill="none" stroke="#fff" stroke-width="1.200"/><path d="M13 5h2v3h-2z" fill="#fff"/></symbol>
        <symbol id="clover" viewBox="0 0 24 24"><g fill="#eee" stroke="#111"><path d="M12 12C8 14 2 12 1 8c0-5 5-8 9-5 3 2 2 6 2 9z"/><path d="M12 12c-2-4-1-10 3-11 5-1 8 4 6 8-2 3-6 3-9 3z"/><path d="M12 12c4-2 10 0 11 4 0 5-5 8-9 6-3-2-3-7-2-10z"/><path d="M12 12c2 4 1 9-3 11-5 1-8-4-6-8 2-3 6-3 9-3z"/></g></symbol>
        <symbol id="ie" viewBox="0 0 20 20"><path d="M17 11H6c0 5 6 6 10 3v3C9 21 2 18 2 11 3 4 8 2 12 3c4 1 5 4 5 8zM6 8h7c0-4-6-4-7 0z" fill="#1c86ee"/><path d="M1 18C-1 13 8 1 18 1c-7 2-14 9-17 17z" fill="#1c86ee"/></symbol>
        <symbol id="files" viewBox="0 0 24 24"><path d="M1 3h8l2 2h12v17H1z" fill="#f7d36b"/><path d="M1 7h22v3H1z" fill="#fdeab0"/><path d="M4 13h17v10h-5v-5H9v5H4z" fill="#39aee6"/></symbol>
        <symbol id="green" viewBox="0 0 24 24"><circle cx="12" cy="12" r="10" fill="#45b534"/><path d="M18 13H8c1 4 5 5 9 3-3 5-13 4-13-4C4 4 18 3 18 13zM8 10h6c0-3-5-3-6 0z" fill="#fff"/><path d="M1 18C4 9 13 2 22 2c-5 5-12 14-17 19z" fill="#9be26d" opacity=".6"/></symbol>
        <symbol id="word" viewBox="0 0 24 24"><path d="M7 1h16v22H7z" fill="#eef4fc" stroke="#4f7ac0"/><path d="M10 5h10M10 9h10M10 13h10M10 17h10M10 20h10" stroke="#4f7ac0"/><path d="M1 5h15v14H1z" fill="#2c5fb0"/><path d="M4 8l2 8 3-8 2 8 3-8" fill="none" stroke="#fff" stroke-width="1.600"/></symbol>
        <symbol id="paint" viewBox="0 0 24 24"><path d="M1 14C1 7 9 3 15 6c5 3 4 8 1 9-3 0-4 1-3 4 0 3-12 5-12-5z" fill="#c7dff2" stroke="#6c8aa8"/><circle cx="6" cy="11" r="2" fill="#e33"/><circle cx="11" cy="8" r="2" fill="#3b5"/><circle cx="5" cy="16" r="2" fill="#26d"/><path d="M13 20L21 2l2 1-7 18z" fill="#d98c3a"/><path d="M19 5l3-5 2 1-2 6z" fill="#8a5322"/></symbol>
        <symbol id="photo" viewBox="0 0 24 24"><path d="M1 1h22v22H1z" fill="#fff"/><path d="M2 21l7-11 4 5 3-4 6 8v2z" fill="#111"/></symbol>
        <symbol id="people" viewBox="0 0 16 16"><g fill="none" stroke="#fff" stroke-width="1.200"><circle cx="11" cy="4" r="2.800"/><path d="M7 10c1-4 7-4 8 1"/><circle cx="5" cy="9" r="2.300"/><path d="M1 16c0-5 7-5 8 0"/></g></symbol>
        <symbol id="chev" viewBox="0 0 12 8"><path d="M1 7l5-5 5 5" fill="none" stroke="#fff" stroke-width="1.200"/></symbol>
        <symbol id="guard" viewBox="0 0 16 16"><circle cx="8" cy="8" r="7.500" fill="#2aa84a"/><path d="M9 15.500A7.500 7.500 0 0 0 15.500 8z" fill="#f6d21c"/><path d="M8 4v8M4 8h8" stroke="#fff" stroke-width="2.400"/></symbol>
        <symbol id="net" viewBox="0 0 16 16"><path d="M4 4h11v8H4zM9 12v3M5 15h8M1 1h4v4H1zM3 5v7" fill="none" stroke="#fff" stroke-width="1.200"/></symbol>
        <symbol id="mute" viewBox="0 0 16 16"><path d="M1 6h2l4-4v11l-4-4H1z" fill="none" stroke="#fff" stroke-width="1.200"/><circle cx="12" cy="12" r="4" fill="#e02020"/><path d="M10 10l4 4M14 10l-4 4" stroke="#fff" stroke-width="1.200"/></symbol>
        <symbol id="note" viewBox="0 0 16 16"><path d="M1 1h14v11H11l-3 3-3-3H1z" fill="none" stroke="#fff" stroke-width="1.200"/></symbol>
    </svg>

    <header class="titlebar">
        <div class="title-row">
            <div class="quick">
                <svg class="i20"><use href="#nx"/></svg>
                <span class="save"></span>
                <span class="qsep"></span>
                <svg class="i16"><use href="#undo"/></svg>
                <svg class="arr"><use href="#down"/></svg>
                <span class="qsep"></span>
                <svg class="i16"><use href="#cut"/></svg>
                <svg class="i16"><use href="#copy"/></svg>
            </div>
            <h1 class="app-title">NX 12 - 加工</h1>
            <div class="win-side">
                <span class="brand">SIEMENS</span>
                <button class="winbtn" aria-label="最小化"><svg class="i14" viewBox="0 0 14 14"><path d="M4 11h6" stroke="#fff" stroke-width="3"/></svg></button>
                <button class="winbtn" aria-label="还原"><svg class="i14" viewBox="0 0 14 14"><path d="M5 5V2h7v7H9M2 5h7v7H2z" fill="none" stroke="#fff" stroke-width="1.500"/></svg></button>
                <button class="winbtn close" aria-label="关闭"><svg class="i14" viewBox="0 0 14 14"><path d="M2 2l10 10M12 2L2 12" stroke="#fff" stroke-width="2.200"/></svg></button>
            </div>
        </div>
        <nav class="tab-row">
            <button class="file-tab">文件(F)</button>
            <button class="home-tab">主页</button>
            <button class="menu-tab star-left">块</button>
            <button class="menu-tab">星空 V6.936F</button>
            <div class="tab-tools">
                <label class="find"><input type="text" value="Head" aria-label="查找命令"><svg class="i16"><use href="#search"/></svg></label>
                <svg class="i16"><use href="#full"/></svg>
                <svg class="i12"><use href="#up"/></svg>
                <span class="help">?</span>
                <a class="tutor" href="#"><svg class="i12"><use href="#hat"/></svg>教程</a>
            </div>
        </nav>
    </header>

    <section class="ribbon">
        <div class="group g-blade">
            <div class="tools">
                <button class="big" disabled><svg class="i30"><use href="#mktool"/></svg>创建刀具</button>
                <button class="big" disabled><svg class="i30"><use href="#mkgeo"/></svg>创建几何体</button>
            </div>
            <div class="caption">刀片</div>
        </div>
        <div class="group g-ops">
            <div class="tools end">
                <button class="big" disabled><svg class="i30"><use href="#post"/></svg>后处理</button>
                <button class="big" disabled><svg class="i30"><use href="#docs"/></svg>车间文档</button>
                <button class="big"><span class="frame"><svg class="i30"><use href="#mill"/></svg></span>更多<svg class="arr"><use href="#down"/></svg></button>
            </div>
            <div class="caption"><svg class="arr"><use href="#down"/></svg></div>
        </div>
        <div class="group g-show">
            <div class="tools mini show-grid">
                <svg class="i18"><use href="#s5pen"/></svg><svg class="arr"><use href="#down"/></svg>
                <svg class="i18"><use href="#rings"/></svg><svg class="arr"><use href="#down"/></svg>
                <svg class="i18"><use href="#s5aim"/></svg><span></span>
                <span class="on"><svg class="i18"><use href="#hatch"/></svg></span><span></span>
                <svg class="i18"><use href="#curve"/></svg><span></span>
                <svg class="i18"><use href="#holder"/></svg><svg class="arr"><use href="#down"/></svg>
                <span class="on"><svg class="i18"><use href="#hatchr"/></svg></span><span></span>
                <svg class="i18"><use href="#circ"/></svg><span></span>
                <svg class="i18"><use href="#slash"/></svg><svg class="arr"><use href="#down"/></svg>
            </div>
            <div class="caption">显示<svg class="arr"><use href="#down"/></svg></div>
        </div>
        <div class="group g-anim">
            <div class="tools">
                <div class="mini play-col">
                    <svg class="i18"><use href="#play"/></svg>
                    <svg class="i18"><use href="#pause"/></svg>
                </div>
                <div class="mini step-grid">
                    <svg class="i18"><use href="#first"/></svg><svg class="i18"><use href="#last"/></svg>
                    <svg class="i18"><use href="#firstd"/></svg><svg class="i18"><use href="#lastd"/></svg>
                    <svg class="i18"><use href="#back"/></svg>
                </div>
                <div class="speed">
                    <span class="combo"><select id="speed"><option>5</option></select><svg class="arr"><use href="#down"/></svg></span>
                    <label for="speed">速度</label>
                </div>
            </div>
            <div class="caption">动画<svg class="arr"><use href="#down"/></svg></div>
        </div>
        <div class="group g-work">
            <div class="tools">
                <div class="mini two">
                    <svg class="i18"><use href="#wp1"/></svg><svg class="i18"><use href="#wp2"/></svg>
                    <svg class="i18"><use href="#wp3"/></svg><svg class="i18"><use href="#wp5"/></svg>
                    <svg class="i18"><use href="#wp4"/></svg><svg class="i18"><use href="#wp6"/></svg>
                </div>
                <button class="big"><svg class="i30"><use href="#ipw"/></svg>显示 3D IPW<svg class="arr"><use href="#down"/></svg></button>
            </div>
            <div class="caption">工件<svg class="arr"><use href="#down"/></svg></div>
        </div>
        <div class="group g-mtool">
            <div class="tools mini four dim">
                <svg class="i16"><use href="#t-check"/></svg><svg class="i16"><use href="#t-part"/></svg><svg class="i16"><use href="#t-list"/></svg><svg class="i16"><use href="#t-grid"/></svg>
                <svg class="i16"><use href="#t-flag"/></svg><svg class="i16 after-line"><use href="#t-copy"/></svg><svg class="i16 after-line"><use href="#t-doc"/></svg><span></span>
                <svg class="i16"><use href="#t-list"/></svg><svg class="i16"><use href="#t-wrench"/></svg><svg class="i16"><use href="#t-clock"/></svg><svg class="i16"><use href="#t-globe"/></svg>
            </div>
            <div class="caption">加工工具 - ...<svg class="arr"><use href="#down"/></svg></div>
        </div>
        <div class="group g-draft">
            <div class="tools center">
                <button class="big"><svg class="i30"><use href="#draft"/></svg>拔模分析<svg class="arr"><use href="#down"/></svg></button>
            </div>
            <div class="caption">分析<svg class="arr"><use href="#down"/></svg></div>
        </div>
        <div class="group g-geo">
            <div class="tools around">
                <button class="big"><svg class="i30"><use href="#point"/></svg>点<svg class="arr"><use href="#down"/></svg></button>
                <button class="big"><svg class="i30"><use href="#extract"/></svg>抽取几何特征<svg class="arr"><use href="#down"/></svg></button>
            </div>
            <div class="caption">几何体<svg class="arr"><use href="#down"/></svg></div>
        </div>
        <div class="group g-sync">
            <div class="tools around">
                <button class="big" disabled><svg class="i30"><use href="#cubemove"/></svg>移动面</button>
                <div class="mini one dim">
                    <svg class="i16"><use href="#cubes"/></svg><svg class="i16"><use href="#cubes"/></svg><svg class="i16"><use href="#cubex"/></svg>
                </div>
                <button class="big"><span class="frame"><svg class="i30"><use href="#sync"/></svg></span>更多<svg class="arr"><use href="#down"/></svg></button>
            </div>
            <div class="caption">同步建模<svg class="arr"><use href="#down"/></svg></div>
        </div>
        <div class="group g-feat">
            <div class="tools center">
                <button class="big"><svg class="i30"><use href="#feature"/></svg>特征<svg class="arr"><use href="#down"/></svg></button>
            </div>
        </div>
        <div class="group g-rest">
            <div class="tools"></div>
            <div class="caption"><svg class="arr"><use href="#down"/></svg></div>
        </div>
    </section>

    <section class="selbar">
        <div class="sel-left">
            <svg class="i18"><use href="#menu"/></svg>
            <button class="menu-btn">菜单(<u>M</u>)</button>
            <svg class="arr"><use href="#down"/></svg>
            <span class="sep"></span>
            <span class="on"><svg class="i18"><use href="#tree"/></svg></span>
            <svg class="i18"><use href="#tree2"/></svg>
            <span class="combo off"><select disabled aria-label="选择范围"><option>整个装配</option></select><svg class="arr"><use href="#down"/></svg></span>
        </div>
        <div class="sel-tools">
            <svg><use href="#m1"/></svg><svg><use href="#m2"/></svg><svg><use href="#m3"/></svg><svg class="arr"><use href="#down"/></svg>
            <svg><use href="#m4"/></svg><svg><use href="#m5"/></svg><svg><use href="#m6"/></svg><svg><use href="#m7"/></svg><svg><use href="#m8"/></svg><svg class="arr"><use href="#down"/></svg>
            <svg><use href="#m9"/></svg><svg><use href="#m10"/></svg>
            <span class="sep"></span>
            <svg><use href="#m11"/></svg><svg><use href="#m12"/></svg><svg><use href="#m13"/></svg><svg><use href="#m14"/></svg><svg><use href="#m15"/></svg>
            <svg><use href="#m16"/></svg><svg class="arr"><use href="#down"/></svg>
            <svg><use href="#m17"/></svg><svg class="arr"><use href="#down"/></svg>
            <svg><use href="#m18"/></svg><svg class="arr"><use href="#down"/></svg>
            <svg><use href="#m19"/></svg><svg class="arr"><use href="#down"/></svg>
            <span class="sep"></span>
        </div>
        <svg class="arr overflow"><use href="#down"/></svg>
    </section>

    <main class="work">
        <aside class="resbar">
            <svg class="i14 res-gear"><use href="#gear"/></svg>
            <button aria-label="装配导航器"><svg><use href="#r1"/></svg></button>
            <button aria-label="约束导航器"><svg><use href="#r2"/></svg></button>
            <button aria-label="部件导航器"><svg><use href="#r3"/></svg></button>
            <button class="active" aria-label="工序导航器"><svg><use href="#r4"/></svg></button>
            <button aria-label="加工特征导航器"><svg><use href="#r5"/></svg></button>
            <button aria-label="机床导航器"><svg><use href="#r6"/></svg></button>
            <button aria-label="重用库"><svg><use href="#r7"/></svg></button>
            <button class="apart" aria-label="HD3D"><svg><use href="#r8"/></svg></button>
            <button class="apart" aria-label="Web 浏览器"><svg><use href="#r9"/></svg></button>
            <button class="apart" aria-label="历史记录"><svg><use href="#r10"/></svg></button>
            <button aria-label="可视化"><svg><use href="#r11"/></svg></button>
            <button aria-label="加工向导"><svg><use href="#r12"/></svg></button>
            <div class="res-scroll">
                <svg viewBox="0 0 14 14" class="dim"><path d="M3 4h8M3 10l4-4 4 4z" fill="#777" stroke="#777"/></svg>
                <svg viewBox="0 0 14 14" class="dim"><path d="M3 9l4-4 4 4z" fill="#777"/></svg>
                <svg viewBox="0 0 14 14"><path d="M3 5l4 4 4-4z" fill="#333"/></svg>
                <svg viewBox="0 0 14 14"><path d="M3 4l4 4 4-4zM3 10h8" fill="#333" stroke="#333"/></svg>
            </div>
        </aside>

        <section class="navigator">
            <div class="nav-title"><h2>工序导航器 - 程序顺序</h2><span class="restore"></span></div>
            <div class="tree-box">
                <div class="tree-view">
                    <table>
                        <colgroup><col class="c-name"><col class="c-swap"><col class="c-path"><col class="c-tool"><col class="c-num"></colgroup>
                        <thead><tr><th>名称</th><th>换刀</th><th>刀轨</th><th>刀具</th><th>刀具号</th></tr></thead>
                        <tbody>
                            <tr><td>NC_PROGRAM</td><td></td><td></td><td></td><td></td></tr>
                            <tr><td><div class="node"><svg class="branch"><use href="#b1"/></svg><svg class="i14"><use href="#folder"/></svg><span>未用项</span></div></td><td></td><td></td><td></td><td></td></tr>
                            <tr><td><div class="node"><svg class="branch"><use href="#b2"/></svg><svg class="i14"><use href="#noentry"/></svg><svg class="i14"><use href="#folder"/></svg><span>PROGRAM</span></div></td><td></td><td></td><td></td><td></td></tr>
                            <tr class="violet"><td><div class="node leaf"><svg class="branch"><use href="#b3"/></svg><svg class="i14"><use href="#warn"/></svg><svg class="i14"><use href="#opc"/></svg><span>使用</span></div></td><td></td><td></td><td>D16</td><td>6</td></tr>
                            <tr class="picked"><td><div class="node leaf"><svg class="branch"><use href="#b3"/></svg><svg class="i14"><use href="#noentry"/></svg><svg class="i14"><use href="#opc"/></svg><span>使用</span></div></td><td></td><td></td><td>D16</td><td>6</td></tr>
                            <tr><td><div class="node leaf"><svg class="branch"><use href="#b3"/></svg><svg class="i14"><use href="#warn"/></svg><svg class="i14"><use href="#opc"/></svg><span>使用</span></div></td><td></td><td></td><td>D16</td><td>6</td></tr>
                            <tr><td><div class="node leaf"><svg class="branch"><use href="#b3"/></svg><svg class="i14"><use href="#warn"/></svg><svg class="i14"><use href="#opc"/></svg><span>使用</span></div></td><td></td><td></td><td>D16</td><td>6</td></tr>
                            <tr><td><div class="node leaf"><svg class="branch"><use href="#b3"/></svg><svg class="i14"><use href="#warn"/></svg><svg class="i14"><use href="#op"/></svg><span>等高</span></div></td><td></td><td></td><td>D16</td><td>6</td></tr>
                            <tr><td><div class="node leaf"><svg class="branch"><use href="#b3"/></svg><svg class="i14"><use href="#warn"/></svg><svg class="i14"><use href="#op"/></svg><span>等高</span></div></td><td></td><td></td><td>D16</td><td>6</td></tr>
                            <tr><td><div class="node leaf"><svg class="branch"><use href="#b4"/></svg><svg class="i14"><use href="#ok"/></svg><svg class="i14"><use href="#op"/></svg><span>等高</span></div></td><td></td><td></td><td>D16</td><td>6</td></tr>
                            <tr><td></td><td></td><td></td><td></td><td></td></tr>
                            <tr><td></td><td></td><td></td><td></td><td></td></tr>
                            <tr><td></td><td></td><td></td><td></td><td></td></tr>
                            <tr><td></td><td></td><td></td><td></td><td></td></tr>
                            <tr><td></td><td></td><td></td><td></td><td></td></tr>
                            <tr><td></td><td></td><td></td><td></td><td></td></tr>
                            <tr><td></td><td></td><td></td><td></td><td></td></tr>
                            <tr><td></td><td></td><td></td><td></td><td></td></tr>
                            <tr><td></td><td></td><td></td><td></td><td></td></tr>
                            <tr><td></td><td></td><td></td><td></td><td></td></tr>
                            <tr><td></td><td></td><td></td><td></td><td></td></tr>
                            <tr><td></td><td></td><td></td><td></td><td></td></tr>
                            <tr><td></td><td></td><td></td><td></td><td></td></tr>
                            <tr><td></td><td></td><td></td><td></td><td></td></tr>
                            <tr><td></td><td></td><td></td><td></td><td></td></tr>
                            <tr><td></td><td></td><td></td><td></td><td></td></tr>
                        </tbody>
                    </table>
                </div>
                <div class="hscroll">
                    <svg viewBox="0 0 8 10"><path d="M6 1L2 5l4 4" fill="none" stroke="#444" stroke-width="2"/></svg>
                    <span class="thumb"></span>
                    <svg viewBox="0 0 8 10"><path d="M2 1l4 4-4 4" fill="none" stroke="#444" stroke-width="2"/></svg>
                </div>
            </div>
            <div class="splitter"><span></span></div>
            <button class="fold">相关性<span><svg viewBox="0 0 12 8"><path d="M1 1l5 6 5-6" fill="none" stroke="#666" stroke-width="2.400"/></svg></span></button>
            <button class="fold">细节<span><svg viewBox="0 0 12 8"><path d="M1 1l5 6 5-6" fill="none" stroke="#666" stroke-width="2.400"/></svg></span></button>
        </section>

        <section class="graphics">
            <div class="part-tabs">
                <div class="part-tab">
                    <svg class="i14" viewBox="0 0 14 14"><path d="M4 0h4v10H4z" fill="#2a45c8"/><path d="M6 0h2v10H6z" fill="#8ea4f4"/><path d="M3 10h6l-3 4z" fill="#e8d27a"/></svg>
                    <span>刀具半径补偿练习用.prt</span>
                    <svg class="i12" viewBox="0 0 12 12"><path d="M8 1H2v10h8V9M7 1l3 3-3 3M10 4H6" fill="none" stroke="#fff" stroke-width="1.500"/></svg>
                    <svg class="i12" viewBox="0 0 12 12"><path d="M2 2l8 8M10 2l-8 8" stroke="#bbb" stroke-width="1.800"/></svg>
                </div>
            </div>
            <svg class="canvas" viewBox="598 209 1002 628" preserveAspectRatio="xMinYMin slice">
                <defs>
                    <linearGradient id="bg" gradientUnits="userSpaceOnUse" x1="0" y1="209" x2="0" y2="720"><stop offset="0" stop-color="#202122"/><stop offset="1" stop-color="#555658"/></linearGradient>
                    <linearGradient id="wall" gradientUnits="userSpaceOnUse" x1="780" y1="460" x2="925" y2="215"><stop offset="0" stop-color="#de8500"/><stop offset=".5" stop-color="#b06a00"/><stop offset="1" stop-color="#7d4c00"/></linearGradient>
                </defs>
                <rect x="598" y="209" width="1002" height="628" fill="#ffcf12"/>
                <path d="M824 209L797 259 780 309 770 354 767 400 768 444 778 493 791 534 797 549 810 576 835 616 866 653 900 684 940 713 982 735 1025 753 1072 766 1118 773 1165 775 1218 771 1268 761 1316 746 1362 725 1403 701 1442 672 1477 639 1509 602 1535 561 1556 518 1572 473 1582 427 1585 383 1583 337 1580 322 1574 289 1561 249 1543 209z" fill="url(#bg)" stroke="#2a2a2a"/>
                <path d="M824 209L797 259 780 309 770 354 767 400 768 444 778 493 791 534 797 549Q794 520 796 486Q797 450 809 407Q818 375 838 337Q853 304 873 276Q896 244 938 209z" fill="url(#wall)"/>
                <path d="M1494 209Q1525 236 1545 266Q1570 300 1580 327L1574 289 1561 249 1543 209z" fill="#8a5400"/>
                <path d="M938 209Q896 244 873 276Q853 304 838 337Q818 375 809 407Q797 450 796 486Q794 520 797 549M1494 209Q1525 236 1545 266Q1570 300 1580 327" fill="none" stroke="#4a5cf2" stroke-width="1.500"/>
                <path d="M598 751L629 793 669 837H598z" fill="#7f4c00" stroke="#2a2a2a"/>
                <path d="M598 804L618 837H598z" fill="#555658"/>
                <path d="M598 804L618 837" stroke="#4a5cf2" stroke-width="2"/>
                <!-- machine coordinate system -->
                <path d="M1176 390L1169 362" stroke="#0b2aa8" stroke-width="2"/>
                <path d="M1165 353l6 7-2 5-5-1z" fill="#0a2390"/>
                <path d="M1176 390L1177 310" stroke="#3ab03a" stroke-width="2"/>
                <path d="M1177.500 293l3.500 19h-7z" fill="#3ab03a"/>
                <path d="M1176 391L1260 389" stroke="#e03a3a" stroke-width="2"/>
                <path d="M1281 388.500l-23-3v7z" fill="#e03a3a"/>
                <g class="axis-text">
                    <text x="1155" y="292" fill="#3a993a">YM</text>
                    <text x="1167" y="353" fill="#1a40e8">ZM</text>
                    <text x="1264" y="384" fill="#c83838">XM</text>
                </g>
                <!-- view triad -->
                <path d="M649 756l4-3h17l3 4v18l-3 5h-21z" fill="#d3cca0" fill-opacity=".85" stroke="#aaa990"/>
                <path d="M649 761h23M649 773h23M669 753v27" stroke="#aaa990"/>
                <path d="M651 780V752" stroke="#8fc79a" stroke-width="2"/>
                <path d="M651 745l2 8h-4z" fill="#2f9c3a"/>
                <path d="M650 781L647 771" stroke="#0b2aa8" stroke-width="3"/>
                <path d="M644 771l4-4 2 5z" fill="#0b2aa8"/>
                <path d="M651 781H680" stroke="#d82a2a" stroke-width="2"/>
                <path d="M687 781l-8-2v4z" fill="#c02020"/>
                <circle cx="650" cy="781" r="4" fill="#ccc" stroke="#888"/>
                <g class="triad-text">
                    <text x="647" y="747" fill="#4b9a2a">Y</text>
                    <text x="642" y="771" fill="#2a40d8">Z</text>
                    <text x="687" y="785" fill="#d8512a">X</text>
                </g>
            </svg>
        </section>
    </main>

    <footer class="status">
        <span class="hint">指定非切削参数</span>
        <span class="current">当前: 使用轮廓模式所有精加工半径补偿</span>
        <span class="status-icon"><svg class="i16" viewBox="0 0 16 16"><path d="M1 5V1h4M11 1h4v4M15 11v4h-4M5 15H1v-4" fill="none" stroke="#fff" stroke-width="1.500"/><path d="M3 3h10v10H3z" fill="#fff" stroke="#333"/><path d="M5 6h6v4H5z" fill="#2c6fd0"/></svg></span>
        <span class="status-end"></span>
    </footer>

    <div class="taskbar">
        <button class="task"><svg class="i16"><use href="#win"/></svg></button>
        <button class="task"><svg class="i16"><use href="#cort"/></svg></button>
        <button class="task"><svg class="i16"><use href="#tview"/></svg></button>
        <button class="task wide"><svg class="i22"><use href="#clover"/></svg></button>
        <label class="task-search"><svg class="i20"><use href="#ie"/></svg><input type="text" placeholder="搜索一下" aria-label="搜索"><svg class="i18 lens" viewBox="0 0 18 18"><circle cx="8" cy="8" r="6.500" fill="none" stroke="#999" stroke-width="1.300"/><path d="M13 13l4 4" stroke="#999" stroke-width="1.300"/></svg></label>
        <div class="apps">
            <button class="task run"><svg class="i24"><use href="#files"/></svg></button>
            <button class="task run"><svg class="i24"><use href="#green"/></svg></button>
            <button class="task run front"><svg class="i24"><use href="#nx"/></svg></button>
            <button class="task run"><svg class="i24"><use href="#word"/></svg></button>
            <button class="task run"><svg class="i24"><use href="#paint"/></svg></button>
            <button class="task run"><svg class="i24"><use href="#photo"/></svg></button>
        </div>
        <div class="tray">
            <svg class="i16 folk"><use href="#people"/></svg>
            <svg class="i12 more"><use href="#chev"/></svg>
            <svg class="i16"><use href="#guard"/></svg>
            <svg class="i16"><use href="#net"/></svg>
            <svg class="i16"><use href="#mute"/></svg>
            <span class="ime">中</span>
            <span class="ime-m">M</span>
            <div class="clock"><span>17:32</span><span>2019/4/22</span></div>
            <svg class="i16"><use href="#note"/></svg>
            <span class="desk"></span>
        </div>
    </div>

    <!-- Non cutting moves dialog -->
    <form class="dialog">
        <div class="dlg-title">
            <svg class="i14"><use href="#gear"/></svg>
            <h2>非切削移动</h2>
            <button type="button" class="dlg-close" aria-label="关闭"><svg class="i14" viewBox="0 0 14 14"><path d="M2 2l10 10M12 2L2 12" stroke="#fff" stroke-width="3"/></svg></button>
        </div>
        <div class="dlg-main">
            <div class="dlg-pages">
                <div class="tabs">
                    <button type="button">进刀</button><button type="button">退刀</button><button type="button">光顺</button>
                </div>
                <div class="tabs second">
                    <button type="button">起点/钻点</button><button type="button">转移/快速</button><button type="button" class="short">避让</button><button type="button" class="short current-tab">更多</button>
                </div>
                <div class="page">
                    <div class="sec-head"><span>碰撞检查</span><i><svg class="i12"><use href="#up"/></svg></i></div>
                    <div class="sec-body single">
                        <label class="check"><input type="checkbox" checked>碰撞检查</label>
                    </div>
                    <div class="sec-head"><span>刀具补偿</span><i><svg class="i12"><use href="#up"/></svg></i></div>
                    <div class="sec-body">
                        <div class="field"><label for="pos">刀具补偿位置</label><span class="combo pos"><select id="pos"><option>所有精加工刀路</option></select><svg class="arr"><use href="#down"/></svg></span></div>
                        <div class="field"><label for="minmove">最小移动</label><input class="num marked" id="minmove" type="text" value="16.00000"><span class="combo unit"><select aria-label="单位"><option>mm</option></select><svg class="arr"><use href="#down"/></svg></span></div>
                        <div class="field"><label for="minang">最小角度</label><input class="num" id="minang" type="text" value="10.00000"></div>
                        <label class="check"><input type="checkbox" checked>如果小于最小值，则抑制刀具补偿</label>
                        <label class="check"><input type="checkbox">输出平面</label>
                        <label class="check"><input type="checkbox" checked>输出接触/跟踪数据</label>
                    </div>
                </div>
            </div>
            <div class="vscroll">
                <svg viewBox="0 0 10 8"><path d="M1 6l4-4 4 4" fill="none" stroke="#444" stroke-width="2"/></svg>
                <span></span>
                <svg viewBox="0 0 10 8"><path d="M1 2l4 4 4-4" fill="none" stroke="#444" stroke-width="2"/></svg>
            </div>
        </div>
        <div class="dlg-foot">
            <button type="button" class="btn go">确定</button>
            <button type="button" class="btn">取消</button>
        </div>
    </form>

    <!-- Network speed widget -->
    <div class="speedball">
        <div class="ball">48%</div>
        <div class="rates">
            <span><svg viewBox="0 0 8 10"><path d="M4 9V2M1 4l3-3 3 3" fill="none" stroke="#e2583c" stroke-width="2"/></svg>0K/s</span>
            <span><svg viewBox="0 0 8 10"><path d="M4 1v7M1 6l3 3 3-3" fill="none" stroke="#1f9c4d" stroke-width="2"/></svg>0K/s</span>
        </div>
        <svg class="plus" viewBox="0 0 20 20"><circle cx="9" cy="11" r="8.500" fill="#3b82dd"/><path d="M9 7v8M5 11h8" stroke="#fff" stroke-width="2"/><circle cx="15" cy="5" r="4" fill="#e23636"/></svg>
    </div>

    <!-- Site watermark -->
    <div class="watermark">
        <svg viewBox="0 0 72 82">
            <path d="M14 12L36 0l12 7c6 8 7 14 6 21C44 15 30 12 14 12z" fill="#b8d99a"/>
            <path d="M0 20l12-7c16-1 28 3 37 11C26 16 10 24 0 40z" fill="#8cc9a0"/>
            <path d="M0 43c8-13 14-17 20-18-5 16-4 34 5 49L0 61z" fill="#6ab8cc"/>
            <path d="M51 9l21 12v17c-6 12-10 17-17 20 4-18 3-36-4-49z" fill="#4fae9c"/>
            <path d="M72 42v18c-8 7-20 9-32 3 14-2 25-9 32-21z" fill="#3aa6d4"/>
            <path d="M17 54c14 12 32 14 52 9L36 82l-9-5c-5-7-9-15-10-23z" fill="#0c84c8"/>
            <path d="M20 34l16-10 16 10v18l-16 8-16-8z" fill="#58b3de"/>
            <path d="M20 34l16 8 16-8M36 42v18" fill="none" stroke="#cfe8f2" stroke-width="2"/>
        </svg>
        <div><b>3D世界网</b><span>WWW.3DSJW.COM</span></div>
    </div>
</body>
</html>
```
FILE: styles.css
```css
* {
    margin: 0;
    padding: 0;
    box-sizing: border-box;
}

body {
    display: flex;
    flex-direction: column;
    position: relative;
    height: 100vh;
    overflow: hidden;
    background: #ebebeb;
    color: #000;
    font: 12px/16px "Open Sans", "Noto Sans CJK SC", sans-serif;
}

button, input, select {
    font: inherit;
    color: inherit;
    border: none;
    background: none;
}

svg { flex: none; }
.sprite { position: absolute; width: 0; height: 0; }

.i12 { width: 12px; height: 12px; }
.i14 { width: 14px; height: 14px; }
.i16 { width: 16px; height: 16px; }
.i18 { width: 18px; height: 18px; }
.i20 { width: 20px; height: 20px; }
.i22 { width: 22px; height: 22px; }
.i24 { width: 24px; height: 24px; }
.i30 { width: 30px; height: 30px; }
.arr { width: 6px; height: 4px; }
.dim { opacity: 0.6; }

/* Title bar */
.titlebar {
    height: 56px;
    border-top: 3px solid #55565b;
    background: radial-gradient(ellipse 180px 28px at 1530px 54px, #aaa, transparent), #1c1c1c;
    color: #fff;
}

.title-row, .tab-row {
    display: flex;
    align-items: center;
}

.title-row {
    position: relative;
    justify-content: space-between;
    height: 25px;
    background: linear-gradient(rgba(28, 28, 28, 0), #1c1c1c), linear-gradient(90deg, #8a8a8a, #1c1c1c 240px);
}

.quick {
    display: flex;
    align-items: center;
    gap: 7px;
    padding-left: 2px;
    height: 20px;
    margin-bottom: 5px;
}

.save { width: 14px; height: 14px; background: #050505; }
.qsep { width: 1px; height: 16px; background: #666; }

.app-title {
    position: absolute;
    top: 1px;
    left: 0;
    right: 0;
    padding-left: 259px;
    text-align: center;
    font-size: 12px;
    font-weight: normal;
    line-height: 18px;
}

.win-side {
    display: flex;
    align-items: center;
    gap: 4px;
    padding-right: 3px;
    z-index: 1;
}

.brand {
    margin-right: 18px;
    font: bold 14px/16px "Open Sans", sans-serif;
}

.winbtn {
    width: 20px;
    height: 20px;
    margin-top: -3px;
    border: 1px solid #777;
    border-radius: 3px;
    background: linear-gradient(#777, #333);
}

.winbtn.close {
    border-color: #f08060;
    background: linear-gradient(#f08a70, #d8300c);
}

.winbtn svg { display: block; margin: auto; }

.tab-row { height: 28px; gap: 2px; }

.file-tab {
    width: 78px;
    height: 28px;
    border-radius: 3px 3px 0 0;
    background: linear-gradient(#2d5da8, #1c4c96 60%, #43a2e0);
}

.home-tab {
    width: 50px;
    height: 28px;
    border-radius: 3px 3px 0 0;
    background: linear-gradient(#fff, #e4e4e4);
    color: #00004c;
}

.menu-tab { padding: 0 12px; }
.star-left { margin-left: 335px; }

.tab-tools {
    display: flex;
    align-items: center;
    gap: 14px;
    margin-left: auto;
    padding-right: 8px;
}

.find {
    display: flex;
    align-items: center;
    width: 142px;
    height: 23px;
    margin-right: -4px;
    padding: 0 4px 0 3px;
    border: 1px solid #666;
    background: #333;
    color: #ddd;
}

.find input { flex: 1; min-width: 0; }

.help {
    width: 13px;
    height: 13px;
    border-radius: 50%;
    background: #3b6ed8;
    font: bold 10px/13px "Open Sans", sans-serif;
    text-align: center;
}

.tutor {
    display: flex;
    align-items: center;
    gap: 5px;
    color: #ddd;
    text-decoration: none;
}

/* Ribbon */
.ribbon {
    display: flex;
    height: 98px;
    border-bottom: 2px solid #999;
    background: linear-gradient(#e4e4e4, #c9c9c9);
}

.group {
    display: flex;
    flex-direction: column;
    flex: none;
    border-right: 2px solid #f4f4f4;
}

.g-blade { width: 204px; border: none; }
.g-ops { width: 405px; }
.g-show { width: 125px; }
.g-anim { width: 196px; }
.g-work { width: 144px; }
.g-mtool { width: 98px; }
.g-draft { width: 71px; }
.g-geo { width: 136px; }
.g-sync { width: 127px; }
.g-feat { width: 43px; }
.g-rest { flex: 1; border: none; }

.tools {
    display: flex;
    flex: 1;
    gap: 8px;
    min-height: 0;
    padding: 5px 6px 0;
}

.g-blade .tools { padding-left: 13px; }
.g-anim .tools { gap: 0; }
.g-work .tools { gap: 3px; }
.tools.end { justify-content: flex-end; padding-right: 4px; }
.tools.center { justify-content: center; padding-left: 0; padding-right: 0; }
.tools.around { justify-content: space-around; gap: 0; padding-left: 6px; padding-right: 0; }
.g-geo .tools.around { padding-right: 6px; }

.big {
    display: flex;
    flex-direction: column;
    align-items: center;
    height: 66px;
    padding-top: 1px;
    white-space: nowrap;
}

.big > .i30 { margin-bottom: 6px; }
.big > .arr { margin-top: 4px; }
.big:disabled { color: #999; }
.big:disabled svg { opacity: 0.7; }

.frame {
    width: 38px;
    height: 34px;
    margin: -1px 0 3px;
    padding-top: 1px;
    border: 1px solid #bbb;
    border-radius: 3px;
    background: #e3e3e3;
}

.caption {
    position: relative;
    height: 17px;
    padding-right: 20px;
    color: #444;
    text-align: center;
    white-space: nowrap;
}

.g-blade .caption { padding-right: 0; }

.caption .arr {
    position: absolute;
    right: 8px;
    top: 6px;
    color: #222;
}

.mini {
    display: grid;
    grid-auto-rows: 23px;
    align-content: start;
    place-items: center;
    gap: 0;
}

.tools.mini { padding: 1px 6px 0; }
.tools .mini { margin-top: -5px; }
.show-grid { grid-template-columns: 24px 13px 24px 13px 24px 13px; }
.tools .play-col { width: 28px; grid-auto-rows: 36px; margin: -1px 0 0 9px; }
.step-grid { grid-template-columns: 31px 29px; margin-left: -3px; }
.two { grid-template-columns: 26px 26px; }
.tools.four { grid-template-columns: repeat(4, 23px); padding: 1px 2px 0; }
.after-line { margin-left: 12px; }

.on {
    display: grid;
    place-items: center;
    width: 23px;
    height: 22px;
    border: 1px solid #666;
    border-radius: 3px;
    background: #fff;
}

.speed { text-align: center; }
.speed .combo { width: 90px; margin: 4px 0 11px; }

/* Drop-downs */
.combo {
    display: flex;
    position: relative;
    height: 22px;
    border: 2px solid #808080;
    border-right-color: #aaa;
    border-bottom-color: #aaa;
    border-radius: 4px;
    background: #fff;
    overflow: hidden;
}

.combo select {
    appearance: none;
    width: 100%;
    padding: 0 20px 0 3px;
    background: linear-gradient(#2e62b8, #5c98dc 50%, #a4d4fa) right / 16px 100% no-repeat;
    color: #000;
    opacity: 1;
}

.combo .arr {
    position: absolute;
    right: 3px;
    top: 6px;
    width: 11px;
    height: 7px;
    pointer-events: none;
}

.combo.off select { background: linear-gradient(#e8e8e8, #e8e8e8) right / 16px 100% no-repeat; color: #bbb; }
.combo.off { background: #eee; border-color: #bbb; color: #999; }

/* Selection bar */
.selbar {
    display: flex;
    align-items: center;
    height: 32px;
    padding-bottom: 2px;
    border-bottom: 1px solid #b5b5b5;
    background: linear-gradient(#d2d2d2, #dcdcdc);
}

.sel-left {
    display: flex;
    align-items: center;
    width: 598px;
    padding: 0 7px 0 9px;
}

.menu-btn { margin: 0 5px 0 3px; }
.sep { width: 2px; height: 22px; margin: 0 7px; background: #f6f6f6; border-left: 1px solid #bbb; }
.sel-left .on { margin-right: 4px; }
.sel-left .combo { width: 157px; margin-left: auto; }

.sel-tools { display: flex; align-items: center; }
.sel-tools svg { width: 18px; height: 18px; margin: 0 3px; }
.sel-tools svg.arr { width: 6px; height: 4px; margin: 0 4px; }
.overflow { margin: 12px 6px 0 auto; }

/* Work area */
.work {
    display: flex;
    flex: 1;
    min-height: 0;
}

.resbar {
    display: flex;
    flex-direction: column;
    align-items: flex-end;
    gap: 2px;
    width: 31px;
    padding: 8px 0 0;
    border-right: 1px solid #777;
    background: linear-gradient(90deg, #b4b4b4, #9c9c9c);
}

.res-gear { margin: 0 8px 21px 0; }

.resbar button {
    width: 26px;
    height: 40px;
    border: 1px solid #666;
    border-right: none;
    border-radius: 4px 0 0 4px;
    background: linear-gradient(#e2e2e2, #c8c8c8);
}

.resbar button svg { display: block; width: 24px; height: 26px; margin: auto 0 auto 1px; }
.resbar .active { width: 28px; height: 42px; margin-right: -1px; background: #ebebeb; }
.resbar .apart { margin-top: 12px; }

.res-scroll { display: flex; flex-direction: column; gap: 1px; margin: 1px 7px 0 0; }
.res-scroll svg { width: 15px; height: 15px; border: 1px solid #888; background: #e6e6e6; }

.navigator {
    display: flex;
    flex-direction: column;
    width: 567px;
    padding: 0 10px 0 7px;
    border-right: 2px solid #888;
    border-top: 2px solid #999;
}

.nav-title {
    display: flex;
    align-items: center;
    justify-content: space-between;
    height: 28px;
    padding: 0 4px 0 5px;
}

.nav-title h2 { font-size: 12px; }
.restore { width: 13px; height: 12px; border: 1px solid #000; border-top-width: 2px; }

.tree-box {
    display: flex;
    flex-direction: column;
    flex: 1;
    min-height: 0;
    border: 1px solid #666;
    background: #fff;
}

.tree-view {
    flex: 1;
    min-height: 0;
    overflow: hidden;
}

table {
    width: 100%;
    table-layout: fixed;
    border-collapse: separate;
    border-spacing: 0;
}

.c-name { width: 365px; }
.c-swap { width: 44px; }
.c-path { width: 40px; }
.c-tool { width: 51px; }

th {
    height: 22px;
    padding: 2px 0 0 6px;
    border-right: 1px solid #aaa;
    border-bottom: 1px solid #999;
    background: linear-gradient(#f4f6f6, #dfe1e2);
    font-weight: normal;
    text-align: left;
}

td {
    height: 20px;
    padding-left: 4px;
    border-right: 1px solid #e2e2e2;
    border-bottom: 1px solid #e2e2e2;
    background: #fff;
    color: #333;
}

td:first-child { border-right-color: #000; }
tbody tr:nth-child(even) td { background: #f6f6f6; }
tbody .violet td { color: #6a2fc8; }
tbody .picked td { color: #fff; }
tbody .picked td:not(:first-child) { background: #0078d7; }

.node {
    display: flex;
    align-items: center;
    gap: 2px;
    height: 19px;
    margin-left: -5px;
}

.branch { width: 20px; height: 20px; }
.node span { padding-left: 2px; }
.node.leaf { margin-left: 14px; }
.picked .node span { background: #0078d7; line-height: 19px; flex: 1; }

.hscroll {
    display: flex;
    align-items: center;
    justify-content: space-between;
    height: 18px;
    padding: 0 5px 1px;
    background: #f0f0f0;
}

.hscroll svg { width: 8px; height: 10px; }
.thumb { flex: 0 1 346px; height: 15px; margin: 0 auto 0 5px; background: #cbcbcb; }

.splitter {
    height: 10px;
    margin-top: 1px;
    background: linear-gradient(#aaa, #aaa) 0 5px / 100% 1px no-repeat;
}

.splitter span {
    display: block;
    width: 106px;
    height: 5px;
    margin: 3px auto 0;
    border: 1px solid #999;
    background: #e6e6e6;
}

.fold {
    display: flex;
    align-items: center;
    justify-content: space-between;
    height: 23px;
    padding-left: 7px;
    border-bottom: 1px solid #999;
    border-right: 1px solid #999;
    background: linear-gradient(#f4f4f4 50%, #d6d8da);
    color: #00004c;
}

.splitter + .fold { margin-top: 2px; }
.fold:last-child { margin-bottom: 4px; }
.fold span { width: 23px; height: 22px; padding-top: 4px; border-left: 1px solid #999; }
.fold svg { width: 12px; height: 9px; }

/* Graphics window */
.graphics {
    display: flex;
    flex-direction: column;
    flex: 1;
    min-width: 0;
}

.part-tabs { height: 23px; border-bottom: 2px solid #58595b; }

.part-tab {
    display: inline-flex;
    align-items: center;
    gap: 6px;
    height: 22px;
    padding: 0 4px;
    background: #58595b;
    color: #fff;
}

.part-tab .i12 + .i12 { margin-left: -2px; }

.canvas {
    display: block;
    flex: 1;
    width: 100%;
    min-height: 0;
}

.axis-text { font: 13px "Liberation Sans", sans-serif; }
.triad-text { font: 12px "Liberation Sans", sans-serif; }

/* Status bar */
.status {
    display: flex;
    align-items: center;
    height: 23px;
    padding-left: 3px;
    border-top: 2px solid #f0f0f0;
    border-bottom: 1px solid #aaa;
    background: #d9d9d9;
}

.hint { flex: 0 0 750px; font-weight: 500; }
.current { flex: 1; padding-left: 4px; border-left: 1px solid #aaa; font-weight: 500; }

.status-icon {
    display: flex;
    padding: 2px 38px 2px 22px;
    border-left: 2px solid #f4f4f4;
}

.status-end { width: 17px; height: 20px; border-left: 2px solid #f4f4f4; }

/* Taskbar */
.taskbar {
    display: flex;
    align-items: center;
    height: 40px;
    background: linear-gradient(90deg, #090909, #0d0e0f 450px, #323435 650px, #303436 1250px, #1c2630 1450px, #2b2b2c);
    color: #fff;
}

.task { width: 48px; height: 40px; }
.task.wide { width: 52px; }
.task svg { display: block; margin: auto; }

.task-search {
    display: flex;
    align-items: center;
    width: 200px;
    height: 30px;
    padding: 0 7px 0 3px;
    background: #3b3b3b;
}

.task-search input { flex: 1; min-width: 0; padding-left: 4px; }
.task-search input::placeholder { color: #999; opacity: 1; }

.apps { display: flex; gap: 1px; padding-left: 5px; }
.run { border-bottom: 3px solid #76b9ed; background-clip: padding-box; }
.apps .run { width: 40px; margin: 0 4px; }
.apps .front { width: 48px; margin: 0; background: #5a5a5a; }

.tray {
    display: flex;
    align-items: center;
    gap: 8px;
    margin-left: auto;
}

.folk { margin-right: 14px; }
.more { margin-right: 3px; }
.ime { margin-right: 8px; font-size: 13px; }
.ime-m { width: 14px; height: 14px; background: #fff; color: #111; font: bold 13px/14px "Liberation Sans", sans-serif; text-align: center; }
.clock { display: flex; flex-direction: column; align-items: center; gap: 3px; padding: 0 12px 0 10px; }
.desk { width: 5px; height: 40px; margin-left: 12px; border-left: 1px solid #777; }

/* Dialog */
.dialog {
    position: absolute;
    left: 135px;
    top: 0;
    width: 345px;
    border: 1px solid #222;
    border-width: 1px 1px 8px;
    border-radius: 6px;
    background: #ebebeb;
    overflow: hidden;
}

.dlg-title {
    display: flex;
    align-items: center;
    height: 21px;
    padding-left: 3px;
    background: linear-gradient(#6c6c6c, #2a2a2a 40%, #0c0c0c);
    color: #fff;
}

.dlg-title h2 {
    flex: 1;
    height: 21px;
    margin-left: 2px;
    padding-left: 5px;
    border-left: 1px solid #ccc;
    font-size: 12px;
    font-weight: normal;
    line-height: 20px;
}

.dlg-close {
    width: 20px;
    height: 21px;
    border-left: 1px solid #ccc;
}

.dlg-close svg { display: block; margin: auto; }

.dlg-main {
    display: flex;
    gap: 6px;
    padding: 4px 5px 0 11px;
}

.dlg-pages {
    display: flex;
    flex-direction: column;
    width: 304px;
    padding-top: 7px;
}

.tabs { display: flex; gap: 1px; }

.tabs button {
    flex: 1;
    height: 22px;
    border: 1px solid #777;
    border-radius: 4px 4px 0 0;
    background: linear-gradient(#ececec, #d8d8d8);
}

.tabs.second button { flex: 0 0 84px; height: 22px; }
.tabs.second .short { flex: 1; }
.tabs.second .current-tab { border-bottom: none; background: #ebebeb; }

.page {
    height: 531px;
    padding: 6px 5px 0 3px;
    border: 1px solid #777;
    border-width: 0 2px 0 1px;
}

.sec-head {
    display: flex;
    align-items: center;
    justify-content: space-between;
    height: 24px;
    padding-left: 5px;
    border-bottom: 2px solid #888;
    background: linear-gradient(#f6f6f6 50%, #dbdddf);
    color: #00004c;
}

.sec-head i { width: 22px; height: 22px; padding: 6px 4px 0; border-left: 1px solid #888; color: #666; }
.sec-head svg { display: block; height: 9px; }

.sec-body {
    padding: 5px 8px 7px 7px;
    background: #d3d3d3;
    box-shadow: inset 0 0 4px #999;
    border-right: 1px solid #888;
}

.sec-body.single { padding: 4px 8px 8px 7px; }

.field {
    display: flex;
    align-items: center;
    gap: 4px;
    height: 26px;
    padding-bottom: 2px;
}

.field label { flex: 1; }
.combo.pos { width: 139px; }
.combo.unit { width: 61px; }

.num {
    width: 80px;
    height: 22px;
    padding: 0 0 0 9px;
    border: 2px solid #808080;
    border-right-color: #aaa;
    border-bottom-color: #aaa;
    border-radius: 4px;
    background: #fff;
    font: 14px/16px "Liberation Mono", monospace;
}

.num.marked { background: #0078d7; color: #fff; box-shadow: inset 0 0 0 1px #fff; }

.check {
    display: flex;
    align-items: center;
    gap: 2px;
    height: 23px;
}

.check input {
    appearance: none;
    width: 16px;
    height: 16px;
    border: 2px solid #777;
    border-radius: 3px;
    background: linear-gradient(#ccc, #f0f0f0);
}

.check input:checked {
    position: relative;
    border-color: #1e4c8c;
    background: linear-gradient(#e4f2ff, #8cdcf8 50%, #40c8f0);
}

.check input:checked::after {
    content: "";
    position: absolute;
    left: 4px;
    top: 0;
    width: 5px;
    height: 9px;
    border: solid #0c3a80;
    border-width: 0 3px 3px 0;
    transform: rotate(40deg);
}

.vscroll {
    display: flex;
    flex-direction: column;
    align-items: center;
    width: 16px;
    padding: 5px 0 4px;
    background: #f0f0f0;
}

.vscroll svg { width: 10px; height: 8px; }
.vscroll span { width: 15px; flex: 0 1 528px; margin: 3px 0 auto; background: #cbcbcb; }

.dlg-foot {
    display: flex;
    justify-content: flex-end;
    gap: 7px;
    margin: 3px 6px 0 7px;
    padding: 5px 10px 5px;
    border-top: 2px solid #bbb;
}

.btn {
    width: 52px;
    height: 24px;
    border: 2px solid #777;
    border-radius: 4px;
    background: linear-gradient(#f6f6f6 45%, #cfd1d4 55%, #f0f0f0);
}

.btn.go {
    border-color: #3c7a3a;
    background: linear-gradient(#d4f0cc 45%, #7cc86c 55%, #b0f490);
}

/* Speed widget */
.speedball {
    display: flex;
    align-items: center;
    position: absolute;
    right: 0;
    top: 702px;
    width: 103px;
    height: 38px;
    border: 1px solid #bbb;
    border-radius: 19px;
    background: linear-gradient(#fff, #ddd);
    box-shadow: 0 3px 6px rgba(0, 0, 0, 0.4);
    font-size: 10px;
    line-height: 15px;
}

.ball {
    flex: none;
    width: 48px;
    height: 48px;
    margin-left: -25px;
    border: 2px solid #eee;
    border-radius: 50%;
    background: linear-gradient(#48907a, #006e4c 50%, #4ccc60 50%);
    box-shadow: 0 0 0 1px #888, 0 3px 6px rgba(0, 0, 0, 0.4), inset 0 0 0 1px #0a7a50;
    color: #fff;
    font-size: 14px;
    line-height: 43px;
    text-align: center;
}

.rates { flex: 1; padding: 2px 4px 0 4px; }
.rates span { display: flex; align-items: center; justify-content: space-between; }
.rates svg { width: 8px; height: 10px; }
.plus { width: 20px; height: 20px; margin-right: 4px; }

/* Watermark */
.watermark {
    display: flex;
    gap: 8px;
    position: absolute;
    right: 24px;
    bottom: 14px;
    color: #fff;
    opacity: 0.6;
    pointer-events: none;
}

.watermark svg { width: 72px; height: 82px; }
.watermark div { display: flex; flex-direction: column; }
.watermark b { font: bold 42px/48px "Liberation Sans", "Noto Sans CJK SC", sans-serif; margin-top: 8px; }
.watermark span { font: bold 17px/20px "DejaVu Sans", sans-serif; }
```
